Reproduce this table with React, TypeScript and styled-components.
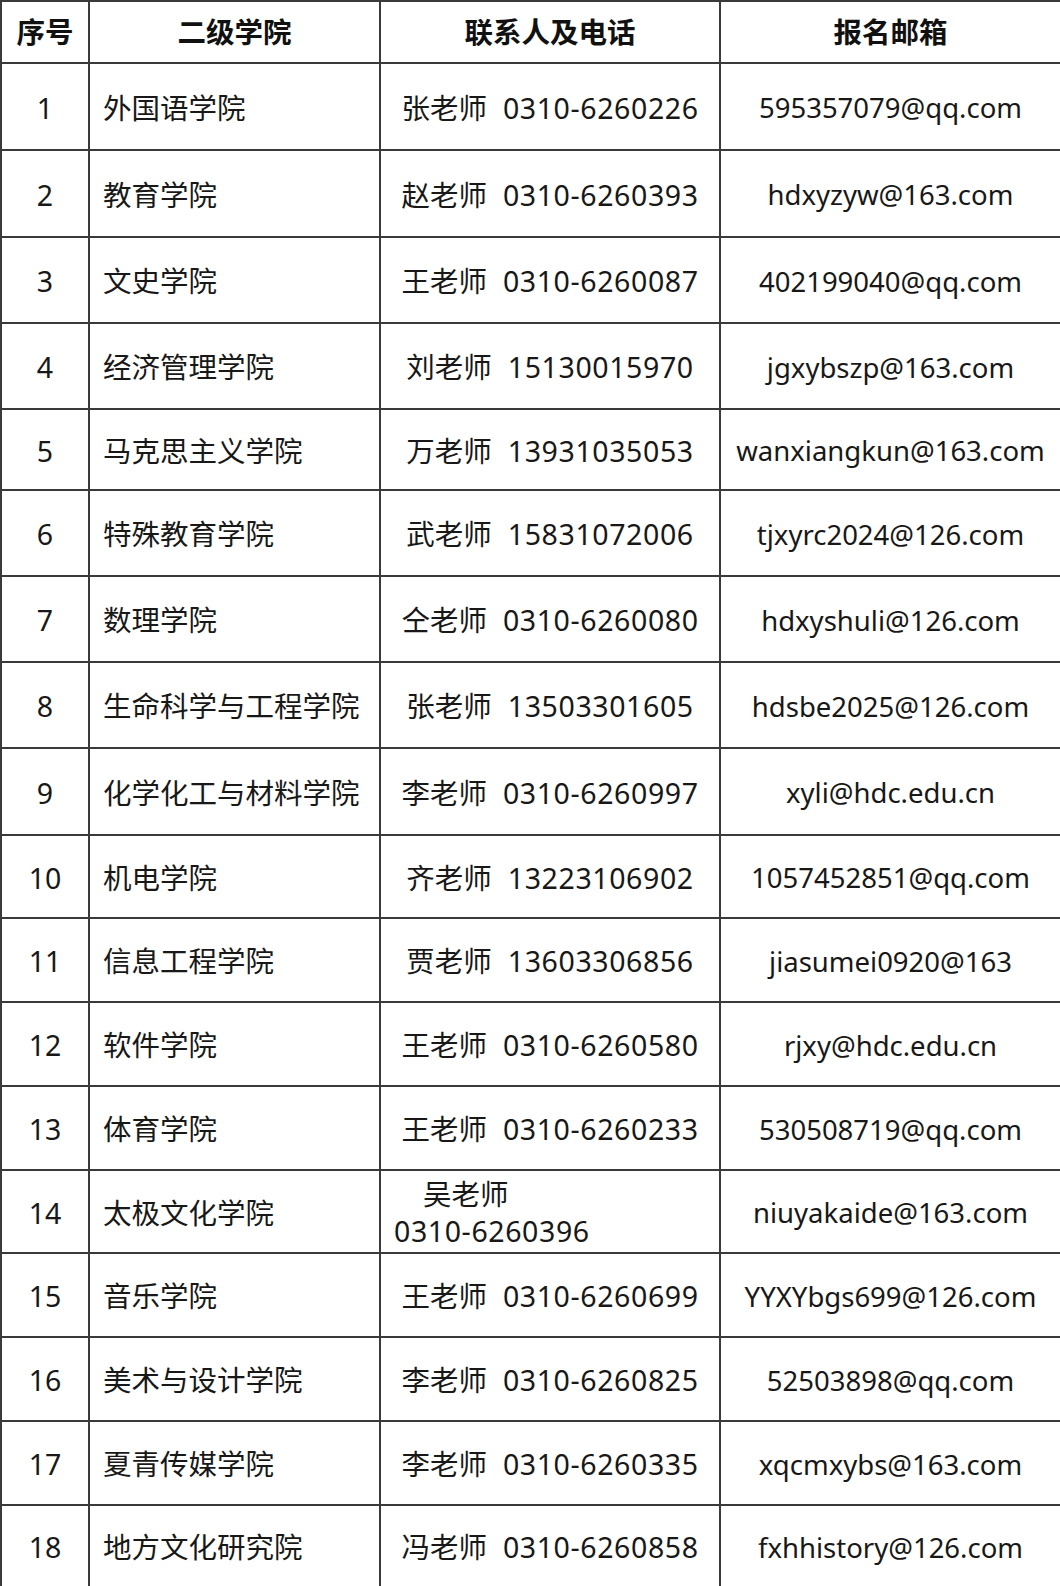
import * as React from "react"
import styled, { createGlobalStyle } from "styled-components"

const GlobalStyle = createGlobalStyle`
  html, body {
    margin: 0;
    padding: 0;
    background: #ffffff;
  }
  body {
    font-family: "Noto Sans", "Noto Sans CJK SC", sans-serif;
    color: #151515;
  }
`

const Table = styled.div`
  width: 1060px;
  box-sizing: border-box;
  border-top: 2px solid #3a3a3a;
  border-left: 2px solid #3a3a3a;
  background: #fff;
  overflow: hidden;
`

const Row = styled.div<{ $h: number }>`
  display: grid;
  grid-template-columns: 88px 291px 340px 1fr;
  height: ${(p) => p.$h}px;
`

const Cell = styled.div<{ $align?: "left" | "center"; $last?: boolean; $head?: boolean }>`
  box-sizing: border-box;
  display: flex;
  align-items: center;
  justify-content: ${(p) => (p.$align === "left" ? "flex-start" : "center")};
  padding-left: ${(p) => (p.$align === "left" ? "13px" : "0")};
  padding-top: ${(p) => (p.$head ? "0" : "3px")};
  border-bottom: 2px solid #3a3a3a;
  border-right: ${(p) => (p.$last ? "none" : "2px solid #3a3a3a")};
  font-size: 28.5px;
  font-weight: ${(p) => (p.$head ? 700 : 400)};
  color: ${(p) => (p.$head ? "#111" : "#181818")};
  white-space: nowrap;
  line-height: 1;
`

const Contact = styled.span`
  display: inline-flex;
  align-items: baseline;
  gap: 16px;
`

const Phone = styled.span`
  letter-spacing: 0.6px;
`

const Email = styled.span`
  font-size: 27.5px;
`

const Wrapped = styled.div`
  width: 100%;
  padding-right: 10px;
  line-height: 37px;
  white-space: normal;
  text-align: left;
  text-indent: 29px;
`

type Item = {
  college: string
  name: string
  phone: string
  email: string
  h: number
  wrap?: boolean
}

const rows: Item[] = [
  { college: "外国语学院", name: "张老师", phone: "0310-6260226", email: "595357079@qq.com", h: 87 },
  { college: "教育学院", name: "赵老师", phone: "0310-6260393", email: "hdxyzyw@163.com", h: 87 },
  { college: "文史学院", name: "王老师", phone: "0310-6260087", email: "402199040@qq.com", h: 86 },
  { college: "经济管理学院", name: "刘老师", phone: "15130015970", email: "jgxybszp@163.com", h: 86 },
  { college: "马克思主义学院", name: "万老师", phone: "13931035053", email: "wanxiangkun@163.com", h: 81 },
  { college: "特殊教育学院", name: "武老师", phone: "15831072006", email: "tjxyrc2024@126.com", h: 86 },
  { college: "数理学院", name: "仝老师", phone: "0310-6260080", email: "hdxyshuli@126.com", h: 86 },
  { college: "生命科学与工程学院", name: "张老师", phone: "13503301605", email: "hdsbe2025@126.com", h: 86 },
  { college: "化学化工与材料学院", name: "李老师", phone: "0310-6260997", email: "xyli@hdc.edu.cn", h: 87 },
  { college: "机电学院", name: "齐老师", phone: "13223106902", email: "1057452851@qq.com", h: 83 },
  { college: "信息工程学院", name: "贾老师", phone: "13603306856", email: "jiasumei0920@163", h: 84 },
  { college: "软件学院", name: "王老师", phone: "0310-6260580", email: "rjxy@hdc.edu.cn", h: 84 },
  { college: "体育学院", name: "王老师", phone: "0310-6260233", email: "530508719@qq.com", h: 84 },
  { college: "太极文化学院", name: "吴老师", phone: "0310-6260396", email: "niuyakaide@163.com", h: 83, wrap: true },
  { college: "音乐学院", name: "王老师", phone: "0310-6260699", email: "YYXYbgs699@126.com", h: 84 },
  { college: "美术与设计学院", name: "李老师", phone: "0310-6260825", email: "52503898@qq.com", h: 84 },
  { college: "夏青传媒学院", name: "李老师", phone: "0310-6260335", email: "xqcmxybs@163.com", h: 84 },
  { college: "地方文化研究院", name: "冯老师", phone: "0310-6260858", email: "fxhhistory@126.com", h: 82 },
]

export default function App() {
  return (
    <>
      <GlobalStyle />
      <Table>
        <Row $h={62}>
          <Cell $head>序号</Cell>
          <Cell $head>二级学院</Cell>
          <Cell $head>联系人及电话</Cell>
          <Cell $head $last>
            报名邮箱
          </Cell>
        </Row>
        {rows.map((r, i) => (
          <Row $h={r.h} key={i}>
            <Cell>{i + 1}</Cell>
            <Cell $align="left">{r.college}</Cell>
            {r.wrap ? (
              <Cell $align="left">
                <Wrapped>
                  {r.name}
                  <br />
                  <Phone>{r.phone}</Phone>
                </Wrapped>
              </Cell>
            ) : (
              <Cell>
                <Contact>
                  <span>{r.name}</span>
                  <Phone>{r.phone}</Phone>
                </Contact>
              </Cell>
            )}
            <Cell $last>
              <Email>{r.email}</Email>
            </Cell>
          </Row>
        ))}
      </Table>
    </>
  )
}
